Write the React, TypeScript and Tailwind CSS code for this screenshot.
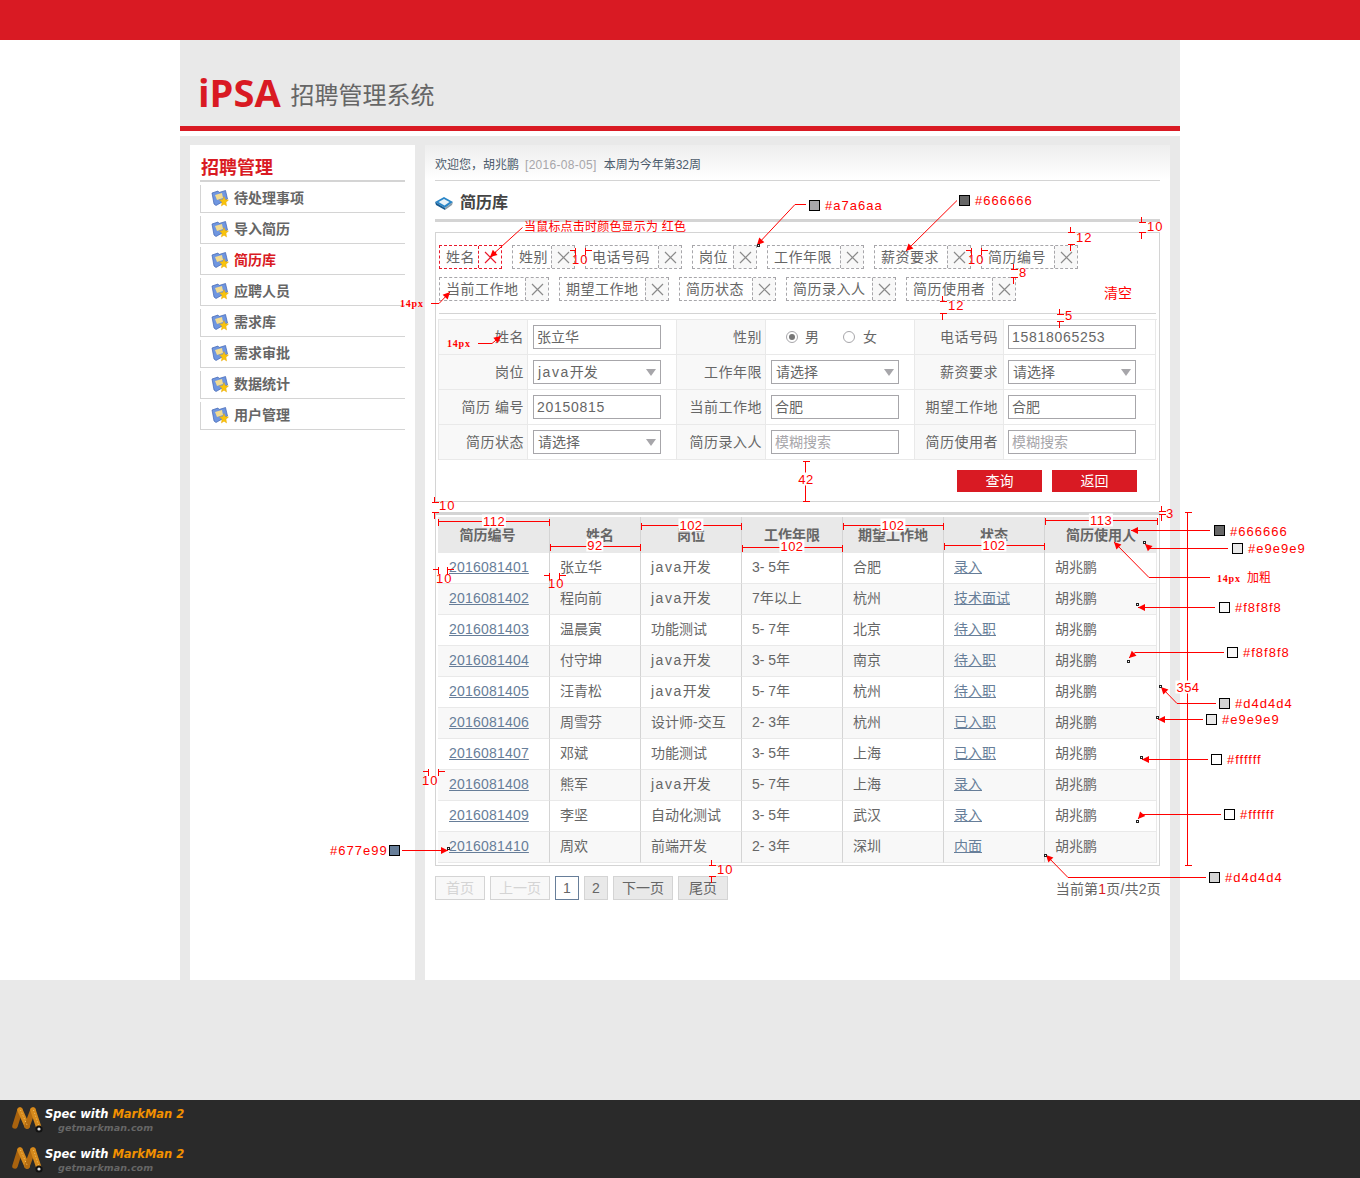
import type { ReactNode } from 'react'

const menuItems = ['待处理事项', '导入简历', '简历库', '应聘人员', '需求库', '需求审批', '数据统计', '用户管理']

const tagRows = [
  [
    { name: '姓名', width: 'w-[38px]', active: true },
    { name: '姓别', width: 'w-[38px]' },
    { name: '电话号码', width: 'w-[72px]' },
    { name: '岗位', width: 'w-[40px]' },
    { name: '工作年限', width: 'w-[72px]' },
    { name: '薪资要求', width: 'w-[72px]' },
    { name: '简历编号', width: 'w-[72px]' },
  ],
  [
    { name: '当前工作地', width: 'w-[85px]' },
    { name: '期望工作地', width: 'w-[85px]' },
    { name: '简历状态', width: 'w-[72px]' },
    { name: '简历录入人', width: 'w-[85px]' },
    { name: '简历使用者', width: 'w-[85px]' },
  ],
]

const resumes = [
  ['2016081401', '张立华', 'java开发', '3- 5年', '合肥', '录入'],
  ['2016081402', '程向前', 'java开发', '7年以上', '杭州', '技术面试'],
  ['2016081403', '温晨寅', '功能测试', '5- 7年', '北京', '待入职'],
  ['2016081404', '付守坤', 'java开发', '3- 5年', '南京', '待入职'],
  ['2016081405', '汪青松', 'java开发', '5- 7年', '杭州', '待入职'],
  ['2016081406', '周雪芬', '设计师-交互', '2- 3年', '杭州', '已入职'],
  ['2016081407', '邓斌', '功能测试', '3- 5年', '上海', '已入职'],
  ['2016081408', '熊军', 'java开发', '5- 7年', '上海', '录入'],
  ['2016081409', '李坚', '自动化测试', '3- 5年', '武汉', '录入'],
  ['2016081410', '周欢', '前端开发', '2- 3年', '深圳', '内面'],
]

function Job({ title }: { title: string }) {
  if (!title.startsWith('java')) return <>{title}</>
  return (
    <>
      <span className="tracking-[1.5px]">java</span>
      {title.slice(4)}
    </>
  )
}

function FolderIcon() {
  return (
    <svg width="18" height="18" viewBox="0 0 18 18" className="shrink-0">
      <path d="M1 4 L7 2 L8 3.5 L14.5 1.5 L16.5 10 L5 16.5 L3 15 Z" fill="#6f96e0" stroke="#3f63b0" strokeWidth="0.7" />
      <path d="M4 6 L11 4 L12 9 L6 11 Z" fill="#f4dc8e" />
      <path d="M13 7.5 L14.2 10.5 L17.5 11 L15 13.2 L15.6 17 L13 15.2 L10.4 17 L11 13.2 L8.5 11 L11.8 10.5 Z" fill="#f8c30c" stroke="#e5a50a" strokeWidth="0.4" />
    </svg>
  )
}

function BookIcon() {
  return (
    <svg width="18" height="14" viewBox="0 0 18 14" className="shrink-0">
      <path d="M0 6 L9 1 L18 6 L10 12 Z" fill="#2a86c8" />
      <path d="M3.5 6 L9 3 L14.5 6 L9.5 9.5 Z" fill="#e8f2f8" />
      <path d="M0 6 L10 12 L10 14 L1 9 Z" fill="#16598f" />
      <path d="M18 6 L10 12 L10 14 L17 9 Z" fill="#8a9aa6" />
    </svg>
  )
}

function CloseMark({ active }: { active?: boolean }) {
  const color = active ? '#e8192c' : '#8a8a8a'
  return (
    <svg width="13" height="13" viewBox="0 0 13 13">
      <path d="M1 1 L12 12 M12 1 L1 12" stroke={color} strokeWidth="1.2" fill="none" />
    </svg>
  )
}

function Tag({ name, width, active }: { name: string; width: string; active?: boolean }) {
  const line = active ? 'border-[#e8192c]' : 'border-[#a7a6aa]'
  return (
    <div className={`flex h-6 border border-dashed ${line}`}>
      <div className={`${width} pl-[6px] text-sm leading-[22px] tracking-[0.5px] text-[#666666]`}>{name}</div>
      <div className={`flex w-[23px] items-center justify-center border-l border-dashed ${line} ${active ? 'bg-white' : 'bg-[#f8f8f8]'}`}>
        <CloseMark active={active} />
      </div>
    </div>
  )
}

function TextField({ value, placeholder, mono }: { value?: string; placeholder?: string; mono?: boolean }) {
  return (
    <div className={`h-6 w-[128px] border border-[#a7a6aa] bg-white pl-[3px] text-sm leading-[22px] ${placeholder ? 'text-[#a7a6aa]' : 'text-[#666666]'} ${mono ? 'tracking-[0.7px]' : ''}`}>
      {value ?? placeholder}
    </div>
  )
}

function SelectField({ value }: { value: string }) {
  return (
    <div className="flex h-6 w-[128px] items-center justify-between border border-[#a7a6aa] bg-white pl-1 pr-[4px] text-sm text-[#666666]">
      <span>
        <Job title={value} />
      </span>
      <svg width="10" height="7" viewBox="0 0 10 7">
        <path d="M0 0 H10 L5 7 Z" fill="#a7a6aa" />
      </svg>
    </div>
  )
}

function Radio({ checked }: { checked?: boolean }) {
  return (
    <span className="flex size-3 items-center justify-center rounded-full border border-[#a7a6aa] bg-white">
      {checked && <span className="size-[6px] rounded-full bg-[#777777]" />}
    </span>
  )
}

function Label({ children, wide }: { children: ReactNode; wide?: boolean }) {
  return (
    <div className={`flex items-center justify-end border-b border-r border-[#e9e9e9] bg-[#f8f8f8] text-sm tracking-[0.5px] text-[#666666] ${wide ? 'pr-[5px]' : 'pr-[3px]'}`}>
      {children}
    </div>
  )
}

function Field({ children, wide }: { children: ReactNode; wide?: boolean }) {
  return (
    <div className={`flex items-center border-b border-r border-[#e9e9e9] ${wide ? 'pl-[4px]' : 'pl-[5px]'}`}>{children}</div>
  )
}

function SearchForm() {
  return (
    <div className="mx-[2px] mt-[5px] grid grid-cols-[89px_149px_89px_149px_89px_152px] auto-rows-[35px] border-l border-t border-[#e9e9e9]">
      <Label>姓名</Label>
      <Field><TextField value="张立华" /></Field>
      <Label>性别</Label>
      <Field>
        <div className="flex items-center pl-[15px] text-sm text-[#666666]">
          <Radio checked />
          <span className="ml-[7px]">男</span>
          <span className="ml-[24px]"><Radio /></span>
          <span className="ml-[8px]">女</span>
        </div>
      </Field>
      <Label wide>电话号码</Label>
      <Field wide><TextField value="15818065253" mono /></Field>

      <Label>岗位</Label>
      <Field><SelectField value="java开发" /></Field>
      <Label>工作年限</Label>
      <Field><SelectField value="请选择" /></Field>
      <Label wide>薪资要求</Label>
      <Field wide><SelectField value="请选择" /></Field>

      <Label>简历 编号</Label>
      <Field><TextField value="20150815" mono /></Field>
      <Label>当前工作地</Label>
      <Field><TextField value="合肥" /></Field>
      <Label wide>期望工作地</Label>
      <Field wide><TextField value="合肥" /></Field>

      <Label>简历状态</Label>
      <Field><SelectField value="请选择" /></Field>
      <Label>简历录入人</Label>
      <Field><TextField placeholder="模糊搜索" /></Field>
      <Label wide>简历使用者</Label>
      <Field wide><TextField placeholder="模糊搜索" /></Field>
    </div>
  )
}

function FilterBox() {
  return (
    <div className="mt-[10px] h-[270px] border border-[#d4d4d4] pt-3">
      {tagRows.map((row, i) => (
        <div key={i} className={`flex gap-[10px] pl-[3px] ${i > 0 ? 'mt-2' : ''}`}>
          {row.map((tag) => (
            <Tag key={tag.name} {...tag} />
          ))}
          {i === 1 && <span className="ml-auto mr-[27px] h-6 pt-[6px] text-sm leading-5 text-[#ff0000]">清空</span>}
        </div>
      ))}
      <div className="mx-[3px] mt-3 h-px bg-[#d4d4d4]" />
      <SearchForm />
      <div className="mt-[10px] flex justify-end gap-[10px] pr-[22px]">
        <button className="h-[22px] w-[85px] bg-[#d91a23] text-sm text-white">查询</button>
        <button className="h-[22px] w-[85px] bg-[#d91a23] text-sm text-white">返回</button>
      </div>
    </div>
  )
}

function ResumeTable() {
  const headCell = 'border-r border-[#d4d4d4] text-center text-sm font-bold text-[#666666]'
  const cell = 'border-b border-r border-b-[#e9e9e9] border-r-[#d4d4d4] pb-[2px] pl-[10px] text-sm text-[#666666]'
  return (
    <div className="mt-[10px] border-x border-b border-t-[3px] border-[#d4d4d4] p-[2px]">
      <table className="w-[719px] table-fixed border-separate border-spacing-0">
        <colgroup>
          <col className="w-[112px]" />
          <col className="w-[91px]" />
          <col className="w-[101px]" />
          <col className="w-[101px]" />
          <col className="w-[101px]" />
          <col className="w-[101px]" />
          <col className="w-[112px]" />
        </colgroup>
        <thead>
          <tr className="h-9 bg-[#e9e9e9]">
            <th className={`${headCell} pr-3`}>简历编号</th>
            <th className={`${headCell} pl-[10px]`}>姓名</th>
            <th className={headCell}>岗位</th>
            <th className={headCell}>工作年限</th>
            <th className={headCell}>期望工作地</th>
            <th className={headCell}>状态</th>
            <th className="text-center text-sm font-bold text-[#666666]">简历使用人</th>
          </tr>
        </thead>
        <tbody>
          {resumes.map((row, i) => (
            <tr key={row[0]} className={`h-[31px] ${i % 2 === 1 ? 'bg-[#f8f8f8]' : 'bg-white'}`}>
              <td className={`${cell} !pl-[11px]`}>
                <span className="tracking-[0.2px] text-[#677e99] underline">{row[0]}</span>
              </td>
              <td className={cell}>{row[1]}</td>
              <td className={cell}>
                <Job title={row[2]} />
              </td>
              <td className={cell}>{row[3]}</td>
              <td className={cell}>{row[4]}</td>
              <td className={cell}>
                <span className="text-[#677e99] underline">{row[5]}</span>
              </td>
              <td className="border-b border-r border-[#e9e9e9] pb-[2px] pl-[10px] text-sm text-[#666666]">胡兆鹏</td>
            </tr>
          ))}
        </tbody>
      </table>
    </div>
  )
}

function Pager() {
  const off = 'flex h-6 items-center justify-center border border-[#d4d4d4] bg-[#f8f8f8] text-sm text-[#d4d4d4]'
  const on = 'flex h-6 items-center justify-center border border-[#d4d4d4] bg-[#e9e9e9] text-sm text-[#666666]'
  return (
    <div className="mt-[10px] flex items-center gap-[5px]">
      <div className={`${off} w-[50px]`}>首页</div>
      <div className={`${off} w-[60px]`}>上一页</div>
      <div className="flex h-6 w-6 items-center justify-center border border-[#677e99] bg-white text-sm text-[#666666]">1</div>
      <div className={`${on} w-6`}>2</div>
      <div className={`${on} w-[60px]`}>下一页</div>
      <div className={`${on} w-[50px]`}>尾页</div>
      <div className="-mr-px ml-auto whitespace-nowrap pt-[2px] text-sm tracking-[0.2px] text-[#666666]">
        当前第<span className="text-[#d91a23]">1</span>页/共2页
      </div>
    </div>
  )
}

function MarkManLogo() {
  return (
    <svg width="32" height="28" viewBox="0 0 32 28" className="shrink-0">
      <g fill="none" strokeLinecap="round" strokeWidth="5.5">
        <path d="M9 4 L4 20" stroke="#a9630f" />
        <path d="M9 4 L16 20" stroke="#d68a1c" />
        <path d="M22 4 L16 20" stroke="#b36c12" />
        <path d="M22 4 L28 22" stroke="#d68a1c" />
      </g>
      <g fill="none" strokeWidth="1" stroke="#f2c46c" strokeDasharray="1 2">
        <path d="M9.5 4 L16.5 20" />
        <path d="M22.5 4 L28.5 22" />
      </g>
      <circle cx="28" cy="23" r="3.6" fill="#111111" />
      <circle cx="28" cy="23" r="1.6" fill="#dddddd" />
    </svg>
  )
}

function Watermark() {
  return (
    <div className="flex h-10 items-center pl-[11px]">
      <MarkManLogo />
      <div className="ml-[2px] flex flex-col pt-[2px] font-['DejaVu_Sans',sans-serif] font-bold italic leading-[13px]">
        <div className="whitespace-nowrap text-[11.5px] text-white">
          Spec with <span className="text-[#f29100]">MarkMan 2</span>
        </div>
        <div className="ml-[13px] text-[9.5px] tracking-[0.1px] text-[#666666]">getmarkman.com</div>
      </div>
    </div>
  )
}

/* ---- 标注层:MarkMan 的红色标注,盖在页面上面 ---- */

function Note({ className, children }: { className: string; children: ReactNode }) {
  return (
    <span className={`absolute -translate-y-1/2 whitespace-nowrap text-[13px] leading-none tracking-[1px] text-[#ff0000] ${className}`}>
      {children}
    </span>
  )
}

function Dim({ className, children }: { className: string; children: ReactNode }) {
  return (
    <span className={`absolute -translate-x-1/2 -translate-y-1/2 whitespace-nowrap bg-white px-px text-[13px] leading-none tracking-[0.5px] text-[#ff0000] ${className}`}>
      {children}
    </span>
  )
}

function Px({ className, children }: { className: string; children: ReactNode }) {
  return (
    <span className={`absolute -translate-y-1/2 whitespace-nowrap font-['Liberation_Serif','Noto_Sans_CJK_SC',serif] text-[10px] font-bold leading-none tracking-[0.8px] text-[#ff0000] ${className}`}>
      {children}
    </span>
  )
}

function Swatch({ className }: { className: string }) {
  return <span className={`absolute size-[11px] border border-black ${className}`} />
}

const hDim = (a: number, b: number, y: number) => `M${a} ${y}H${b}M${a} ${y - 3}V${y + 4}M${b} ${y - 3}V${y + 4}`
const vDim = (a: number, b: number, x: number) => `M${x} ${a}V${b}M${x - 3} ${a}H${x + 4}M${x - 3} ${b}H${x + 4}`
const hGap = (a: number, b: number, y: number) => `M${a - 6} ${y}H${a}M${a} ${y - 3}V${y + 4}M${b} ${y - 3}V${y + 4}M${b} ${y}H${b + 6}`
const vGap = (a: number, b: number, x: number) => `M${x} ${a - 6}V${a}M${x - 3} ${a}H${x + 4}M${x - 3} ${b}H${x + 4}M${x} ${b}V${b + 6}`

function arrowHead(fromX: number, fromY: number, toX: number, toY: number) {
  const len = Math.hypot(toX - fromX, toY - fromY)
  const ux = (toX - fromX) / len
  const uy = (toY - fromY) / len
  const bx = toX - ux * 7
  const by = toY - uy * 7
  return `${toX},${toY} ${bx - uy * 3.5},${by + ux * 3.5} ${bx + uy * 3.5},${by - ux * 3.5}`
}

// 折线:最后两点决定箭头方向
const callouts = [
  [[522.5, 227.5], [490, 257]],
  [[806, 204.5], [795, 204.5], [757, 245]],
  [[957, 200.5], [906, 251]],
  [[431, 303.5], [439, 303.5], [450, 292]],
  [[478, 343.5], [492, 343.5], [501, 336]],
  [[1210, 530.5], [1131, 530.5]],
  [[1228, 548.5], [1150, 548.5], [1145, 544]],
  [[1210, 577.5], [1149, 577.5], [1114, 542]],
  [[1215, 607.5], [1138, 607.5]],
  [[1224, 652.5], [1135, 652.5], [1129, 658]],
  [[1216, 703.5], [1177, 703.5], [1161, 687]],
  [[1203, 719.5], [1158, 719.5]],
  [[1208, 759.5], [1142, 759.5]],
  [[1221, 814.5], [1142, 814.5], [1138, 819]],
  [[1206, 877.5], [1068, 877.5], [1046, 855]],
  [[402, 850.5], [448, 850.5]],
]

const markers = [
  [1143, 541], [1136, 603], [1127, 660], [1159, 685], [1156, 716], [1140, 756], [1136, 820], [1044, 854], [447, 847], [757, 244],
]

function Annotations() {
  const dims = [
    hGap(575.5, 585.5, 250.5),
    hGap(971.5, 981.5, 250.5),
    vGap(232.5, 244.5, 1070.5),
    vGap(269.5, 277.5, 1013.5),
    vGap(222.5, 232.5, 1141.5),
    vGap(301.5, 313.5, 942.5),
    vGap(314.5, 321.5, 1059.5),
    vDim(461.5, 501.5, 805.5),
    vGap(502.5, 512.5, 434.5),
    hDim(438.5, 549.5, 521.5),
    hDim(550.5, 640.5, 546.5),
    hDim(641.5, 741.5, 525.5),
    hDim(742.5, 842.5, 547.5),
    hDim(843.5, 943.5, 525.5),
    hDim(944.5, 1044.5, 545.5),
    hDim(1045.5, 1157.5, 520.5),
    vGap(511.5, 514.5, 1161.5),
    vDim(512.5, 865.5, 1187.5),
    hGap(438.5, 447.5, 569.5),
    hGap(549.5, 559.5, 575.5),
    hGap(428.5, 438.5, 771.5),
    vGap(865.5, 876.5, 711.5),
  ]
  return (
    <div className="pointer-events-none absolute inset-0">
      <svg width="1360" height="1178" className="absolute left-0 top-0">
        <path d={dims.join('')} stroke="#ff0000" fill="none" shapeRendering="crispEdges" />
        {callouts.map((pts, i) => {
          const [a, b] = pts.slice(-2)
          return (
            <g key={i}>
              <polyline points={pts.map((p) => p.join(',')).join(' ')} stroke="#ff0000" fill="none" />
              <polygon points={arrowHead(a[0], a[1], b[0], b[1])} fill="#ff0000" />
            </g>
          )
        })}
        {markers.map(([x, y]) => (
          <rect key={`${x}-${y}`} x={x + 0.5} y={y + 0.5} width="2" height="2" fill="#ffffff" stroke="#222222" />
        ))}
      </svg>

      <Note className="left-[524px] top-[227px] !text-[12px] !tracking-[0.2px]">当鼠标点击时颜色显示为 红色</Note>

      <Swatch className="left-[809px] top-[200px] bg-[#a7a6aa]" />
      <Note className="left-[825px] top-[205px]">#a7a6aa</Note>
      <Swatch className="left-[959px] top-[195px] bg-[#666666]" />
      <Note className="left-[975px] top-[200px]">#666666</Note>
      <Swatch className="left-[1214px] top-[525px] bg-[#666666]" />
      <Note className="left-[1230px] top-[531px]">#666666</Note>
      <Swatch className="left-[1232px] top-[543px] bg-[#e9e9e9]" />
      <Note className="left-[1248px] top-[548px]">#e9e9e9</Note>
      <Px className="left-[1217px] top-[578px]">
        14px <span className="ml-[3px] text-xs font-normal tracking-normal">加粗</span>
      </Px>
      <Swatch className="left-[1219px] top-[602px] bg-[#f8f8f8]" />
      <Note className="left-[1235px] top-[607px]">#f8f8f8</Note>
      <Swatch className="left-[1227px] top-[647px] bg-[#f8f8f8]" />
      <Note className="left-[1243px] top-[652px]">#f8f8f8</Note>
      <Swatch className="left-[1219px] top-[698px] bg-[#d4d4d4]" />
      <Note className="left-[1235px] top-[703px]">#d4d4d4</Note>
      <Swatch className="left-[1206px] top-[714px] bg-[#e9e9e9]" />
      <Note className="left-[1222px] top-[719px]">#e9e9e9</Note>
      <Swatch className="left-[1211px] top-[754px] bg-white" />
      <Note className="left-[1227px] top-[759px]">#ffffff</Note>
      <Swatch className="left-[1224px] top-[809px] bg-white" />
      <Note className="left-[1240px] top-[814px]">#ffffff</Note>
      <Swatch className="left-[1209px] top-[872px] bg-[#d4d4d4]" />
      <Note className="left-[1225px] top-[877px]">#d4d4d4</Note>
      <Note className="left-[330px] top-[850px]">#677e99</Note>
      <Swatch className="left-[389px] top-[845px] bg-[#677e99]" />

      <Px className="left-[400px] top-[304px]">14px</Px>
      <Px className="left-[447px] top-[344px]">14px</Px>

      <Note className="left-[572px] top-[259px]">10</Note>
      <Note className="left-[968px] top-[259px]">10</Note>
      <Note className="left-[1076px] top-[237px]">12</Note>
      <Note className="left-[1019px] top-[272px]">8</Note>
      <Note className="left-[1147px] top-[226px]">10</Note>
      <Note className="left-[948px] top-[305px]">12</Note>
      <Note className="left-[1065px] top-[315px]">5</Note>
      <Dim className="left-[806px] top-[479px]">42</Dim>
      <Note className="left-[439px] top-[505px]">10</Note>
      <Dim className="left-[494px] top-[521px]">112</Dim>
      <Dim className="left-[595px] top-[545px]">92</Dim>
      <Dim className="left-[691px] top-[525px]">102</Dim>
      <Dim className="left-[792px] top-[546px]">102</Dim>
      <Dim className="left-[893px] top-[525px]">102</Dim>
      <Dim className="left-[994px] top-[545px]">102</Dim>
      <Dim className="left-[1101px] top-[520px]">113</Dim>
      <Note className="left-[1166px] top-[513px]">3</Note>
      <Dim className="left-[1188px] top-[687px]">354</Dim>
      <Note className="left-[436px] top-[578px]">10</Note>
      <Note className="left-[548px] top-[583px]">10</Note>
      <Note className="left-[422px] top-[780px]">10</Note>
      <Note className="left-[717px] top-[869px]">10</Note>
    </div>
  )
}

export default function App() {
  return (
    <div className="relative h-[1178px] w-[1360px] overflow-hidden bg-white font-['Liberation_Sans','Noto_Sans_CJK_SC',sans-serif]">
      <div className="h-10 bg-[#d91a23]" />

      <div className="mx-auto h-[940px] w-[1000px] bg-[#e9e9e9]">
        <div className="flex h-[86px] items-end pb-[14px] pl-[18px]">
          <span className="font-['Open_Sans',sans-serif] text-[38px] font-bold leading-[40px] text-[#d91a23]">iPSA</span>
          <span className="ml-[10px] text-2xl leading-8 text-[#666666]">招聘管理系统</span>
        </div>
        <div className="h-[5px] bg-[#d91a23]" />
        <div className="h-[5px] bg-white" />

        <div className="flex gap-[10px] pl-[10px] pt-[9px]">
          <aside className="h-[835px] w-[225px] bg-white px-[10px]">
            <h2 className="h-[35px] pl-px pt-[11px] text-lg font-bold leading-6 text-[#d91a23]">招聘管理</h2>
            <div className="h-[2px] bg-[#d4d4d4]" />
            <ul className="mt-[3px] flex flex-col gap-[3px]">
              {menuItems.map((item) => (
                <li key={item} className="flex h-[28px] items-center gap-[5px] border-b border-l border-[#d4d4d4] pb-[2px] pl-[10px]">
                  <FolderIcon />
                  <span className={`text-sm font-bold ${item === '简历库' ? 'text-[#d91a23]' : 'text-[#666666]'}`}>{item}</span>
                </li>
              ))}
            </ul>
          </aside>

          <main className="h-[835px] w-[745px] bg-white bg-gradient-to-b from-[#eeeeee] to-white to-[35px] px-[10px]">
            <div className="flex h-[36px] items-center border-b border-[#d4d4d4] pt-[5px] text-xs text-[#4c5b6b]">
              欢迎您，胡兆鹏
              <span className="ml-[6px] mr-[7px] tracking-[0.3px] text-[#a7a6aa]">[2016-08-05]</span>
              本周为今年第32周
            </div>
            <div className="flex h-[38px] items-center gap-[7px] pt-[6px]">
              <BookIcon />
              <span className="text-base font-bold text-[#444444]">简历库</span>
            </div>
            <div className="h-[3px] bg-[#d4d4d4]" />
            <FilterBox />
            <ResumeTable />
            <Pager />
          </main>
        </div>
      </div>

      <div className="h-[120px] bg-[#e9e9e9]" />

      <div className="h-[78px] bg-[#2a2a2a]">
        <Watermark />
        <Watermark />
      </div>

      <Annotations />
    </div>
  )
}
